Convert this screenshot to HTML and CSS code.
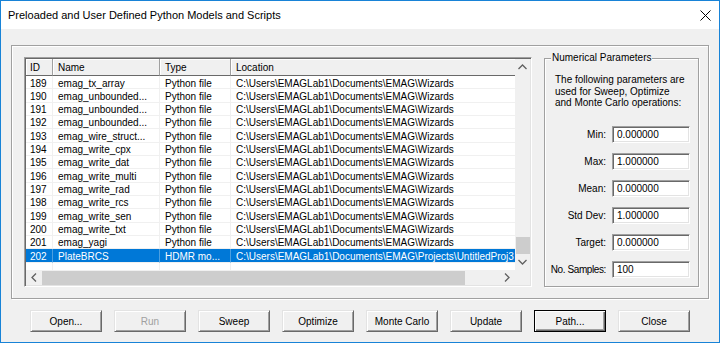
FILE: index.html
```html
<!DOCTYPE html>
<html lang="en">
<head>
    <meta charset="UTF-8">
    <title>Preloaded and User Defined Python Models and Scripts</title>
    <link rel="stylesheet" href="styles.css">
</head>
<body>
    <div class="window">
        <div class="titlebar">
            <span class="title">Preloaded and User Defined Python Models and Scripts</span>
            <svg class="close-icon" width="11" height="11" viewBox="0 0 11 11">
                <path d="M0.5 0.5 L10.5 10.5 M10.5 0.5 L0.5 10.5" stroke="#000" stroke-width="1" fill="none"/>
            </svg>
        </div>

        <div class="client">
            <div class="frame">
                <div class="listview">
                    <div class="lv-view">
                        <div class="lv-header">
                            <div class="hd col-id">ID</div>
                            <div class="hd col-name">Name</div>
                            <div class="hd col-type">Type</div>
                            <div class="hd col-loc">Location</div>
                        </div>
                        <div class="lv-row"><div class="cell col-id">189</div><div class="cell col-name">emag_tx_array</div><div class="cell col-type">Python file</div><div class="cell col-loc">C:\Users\EMAGLab1\Documents\EMAG\Wizards</div></div>
                        <div class="lv-row"><div class="cell col-id">190</div><div class="cell col-name">emag_unbounded...</div><div class="cell col-type">Python file</div><div class="cell col-loc">C:\Users\EMAGLab1\Documents\EMAG\Wizards</div></div>
                        <div class="lv-row"><div class="cell col-id">191</div><div class="cell col-name">emag_unbounded...</div><div class="cell col-type">Python file</div><div class="cell col-loc">C:\Users\EMAGLab1\Documents\EMAG\Wizards</div></div>
                        <div class="lv-row"><div class="cell col-id">192</div><div class="cell col-name">emag_unbounded...</div><div class="cell col-type">Python file</div><div class="cell col-loc">C:\Users\EMAGLab1\Documents\EMAG\Wizards</div></div>
                        <div class="lv-row"><div class="cell col-id">193</div><div class="cell col-name">emag_wire_struct...</div><div class="cell col-type">Python file</div><div class="cell col-loc">C:\Users\EMAGLab1\Documents\EMAG\Wizards</div></div>
                        <div class="lv-row"><div class="cell col-id">194</div><div class="cell col-name">emag_write_cpx</div><div class="cell col-type">Python file</div><div class="cell col-loc">C:\Users\EMAGLab1\Documents\EMAG\Wizards</div></div>
                        <div class="lv-row"><div class="cell col-id">195</div><div class="cell col-name">emag_write_dat</div><div class="cell col-type">Python file</div><div class="cell col-loc">C:\Users\EMAGLab1\Documents\EMAG\Wizards</div></div>
                        <div class="lv-row"><div class="cell col-id">196</div><div class="cell col-name">emag_write_multi</div><div class="cell col-type">Python file</div><div class="cell col-loc">C:\Users\EMAGLab1\Documents\EMAG\Wizards</div></div>
                        <div class="lv-row"><div class="cell col-id">197</div><div class="cell col-name">emag_write_rad</div><div class="cell col-type">Python file</div><div class="cell col-loc">C:\Users\EMAGLab1\Documents\EMAG\Wizards</div></div>
                        <div class="lv-row"><div class="cell col-id">198</div><div class="cell col-name">emag_write_rcs</div><div class="cell col-type">Python file</div><div class="cell col-loc">C:\Users\EMAGLab1\Documents\EMAG\Wizards</div></div>
                        <div class="lv-row"><div class="cell col-id">199</div><div class="cell col-name">emag_write_sen</div><div class="cell col-type">Python file</div><div class="cell col-loc">C:\Users\EMAGLab1\Documents\EMAG\Wizards</div></div>
                        <div class="lv-row"><div class="cell col-id">200</div><div class="cell col-name">emag_write_txt</div><div class="cell col-type">Python file</div><div class="cell col-loc">C:\Users\EMAGLab1\Documents\EMAG\Wizards</div></div>
                        <div class="lv-row"><div class="cell col-id">201</div><div class="cell col-name">emag_yagi</div><div class="cell col-type">Python file</div><div class="cell col-loc">C:\Users\EMAGLab1\Documents\EMAG\Wizards</div></div>
                        <div class="lv-row selected"><div class="cell col-id">202</div><div class="cell col-name">PlateBRCS</div><div class="cell col-type">HDMR mo...</div><div class="cell col-loc">C:\Users\EMAGLab1\Documents\EMAG\Projects\UntitledProj3</div></div>
                        <div class="lv-row filler"><div class="cell col-id"></div><div class="cell col-name"></div><div class="cell col-type"></div><div class="cell col-loc"></div></div>
                    </div>

                    <div class="vscroll">
                        <div class="sb-btn">
                            <svg width="9" height="6" viewBox="0 0 9 6"><polyline points="0.5,5 4.5,1 8.5,5" fill="none" stroke="#606060" stroke-width="1.3"/></svg>
                        </div>
                        <div class="v-track"><div class="v-thumb"></div></div>
                        <div class="sb-btn">
                            <svg width="9" height="6" viewBox="0 0 9 6"><polyline points="0.5,1 4.5,5 8.5,1" fill="none" stroke="#606060" stroke-width="1.3"/></svg>
                        </div>
                    </div>

                    <div class="hscroll">
                        <div class="sb-btn">
                            <svg width="6" height="9" viewBox="0 0 6 9"><polyline points="5,0.5 1,4.5 5,8.5" fill="none" stroke="#606060" stroke-width="1.3"/></svg>
                        </div>
                        <div class="h-track"><div class="h-thumb"></div></div>
                        <div class="sb-btn">
                            <svg width="6" height="9" viewBox="0 0 6 9"><polyline points="1,0.5 5,4.5 1,8.5" fill="none" stroke="#606060" stroke-width="1.3"/></svg>
                        </div>
                    </div>

                    <div class="corner"></div>
                </div>

                <div class="group">
                    <span class="group-title">Numerical Parameters</span>
                    <p class="group-desc">The following parameters are<br>used for Sweep, Optimize<br>and Monte Carlo operations:</p>
                    <div class="fields">
                        <label class="field"><span>Min:</span><input class="edit" type="text" value="0.000000"></label>
                        <label class="field"><span>Max:</span><input class="edit" type="text" value="1.000000"></label>
                        <label class="field"><span>Mean:</span><input class="edit" type="text" value="0.000000"></label>
                        <label class="field"><span>Std Dev:</span><input class="edit" type="text" value="1.000000"></label>
                        <label class="field"><span>Target:</span><input class="edit" type="text" value="0.000000"></label>
                        <label class="field"><span class="tight">No. Samples:</span><input class="edit" type="text" value="100"></label>
                    </div>
                </div>
            </div>

            <div class="buttons">
                <button class="btn">Open...</button>
                <button class="btn" disabled>Run</button>
                <button class="btn">Sweep</button>
                <button class="btn">Optimize</button>
                <button class="btn">Monte Carlo</button>
                <button class="btn">Update</button>
                <button class="btn btn-default">Path...</button>
                <button class="btn">Close</button>
            </div>
        </div>
    </div>
</body>
</html>
```

FILE: styles.css
```css
* {
    margin: 0;
    padding: 0;
    box-sizing: border-box;
}

body {
    font-family: "Liberation Sans", Arial, sans-serif;
    font-size: 10px;
    color: #000;
    background: #fff;
}

.window {
    width: 720px;
    height: 343px;
    border: 1px solid #1883d7;
    background: #f0f0f0;
    display: flex;
    flex-direction: column;
}

.titlebar {
    height: 28px;
    background: #fff;
    display: flex;
    align-items: center;
    justify-content: space-between;
    padding: 0 8px 0 7px;
}

.title {
    font-size: 11px;
}

.client {
    flex: 1;
    padding: 16px 10px 0 10px;
}

/* etched outer frame */
.frame {
    width: 698px;
    height: 254px;
    border: 1px solid #a0a0a0;
    box-shadow: 1px 1px 0 #fff, inset 1px 1px 0 #fff;
    display: flex;
    align-items: flex-start;
    gap: 12px;
    padding: 11px 9px 11px 12px;
}

/* list view */
.listview {
    width: 508px;
    height: 230px;
    flex-shrink: 0;
    border: 1px solid;
    border-color: #a0a0a0 #fff #fff #a0a0a0;
    box-shadow: inset 1px 1px 0 #696969, inset -1px -1px 0 #e3e3e3;
    padding: 1px;
    background: #fff;
    display: grid;
    grid-template-columns: 1fr 15px;
    grid-template-rows: 1fr 15px;
}

.lv-view {
    overflow: hidden;
    background: #fff;
}

.lv-header,
.lv-row {
    display: flex;
    width: max-content;
}

.lv-header {
    height: 17px;
}

.hd {
    height: 17px;
    line-height: 17px;
    padding-left: 5px;
    background: #f0f0f0;
    border-right: 1px solid #a0a0a0;
    border-bottom: 1px solid #696969;
    box-shadow: inset 1px 1px 0 #fff;
    white-space: nowrap;
    flex-shrink: 0;
}

.col-id { width: 27px; }
.col-name { width: 107px; }
.col-type { width: 71px; }
.col-loc { width: 330px; }

.hd.col-id,
.cell.col-id {
    padding-left: 4px;
}

.lv-row {
    height: 13.33px;
}

.cell {
    height: 100%;
    line-height: 12px;
    padding: 1.5px 0 0 5px;
    border-right: 1px solid #f0f0f0;
    border-bottom: 1px solid #f0f0f0;
    white-space: nowrap;
    flex-shrink: 0;
}

.lv-row.selected .cell {
    background: #0078d7;
    color: #fff;
    border-right-color: #4d9fe0;
}

.lv-row.filler {
    height: 20px;
}

.lv-row.filler .cell {
    border-bottom: none;
}

/* scrollbars */
.vscroll,
.hscroll {
    background: #f0f0f0;
    display: flex;
}

.vscroll {
    flex-direction: column;
}

.sb-btn {
    flex: 0 0 16px;
    display: flex;
    align-items: center;
    justify-content: center;
}

.v-track {
    flex: 1;
    display: flex;
    flex-direction: column;
    justify-content: flex-end;
    padding: 0 0 0 1px;
}

.v-thumb {
    height: 17px;
    background: #cdcdcd;
}

.h-track {
    flex: 1;
    display: flex;
    padding: 1px 0 0 0;
}

.h-thumb {
    width: 423px;
    background: #cdcdcd;
}

.corner {
    background: #f0f0f0;
}

/* numerical parameters group */
.group {
    width: 155px;
    height: 229px;
    margin-top: 1px;
    flex-shrink: 0;
    border: 1px solid #a0a0a0;
    box-shadow: 1px 1px 0 #fff, inset 1px 1px 0 #fff;
    padding: 0 8px 0 10px;
    display: flex;
    flex-direction: column;
}

.group-title {
    align-self: flex-start;
    margin: -7px 0 0 -4px;
    padding: 0 1px;
    line-height: 12px;
    background: #f0f0f0;
}

.group-desc {
    margin-top: 10px;
    line-height: 11.7px;
    white-space: nowrap;
}

.fields {
    margin-top: 17px;
    display: flex;
    flex-direction: column;
    gap: 10px;
}

.field {
    display: flex;
    justify-content: flex-end;
    align-items: center;
    gap: 6px;
    height: 17px;
}

.field span {
    white-space: nowrap;
    flex-shrink: 0;
}

.field .tight {
    letter-spacing: -0.4px;
}

.edit {
    width: 78px;
    height: 17px;
    flex-shrink: 0;
    font: inherit;
    color: #000;
    background: #fff;
    border: 1px solid;
    border-color: #a0a0a0 #fff #fff #a0a0a0;
    box-shadow: inset 1px 1px 0 #696969, inset -1px -1px 0 #e3e3e3;
    padding: 0 0 0 4px;
    outline: none;
}

/* push buttons */
.buttons {
    display: flex;
    justify-content: space-between;
    padding: 0 19px;
    margin-top: 11px;
}

.btn {
    width: 72px;
    height: 22px;
    font: inherit;
    color: #000;
    background: #f0f0f0;
    border: 1px solid;
    border-color: #e3e3e3 #696969 #696969 #e3e3e3;
    box-shadow: inset 1px 1px 0 #fff, inset -1px -1px 0 #a0a0a0;
}

.btn:disabled {
    color: #a0a0a0;
}

.btn-default {
    border-color: #000;
    box-shadow: inset 1px 1px 0 #fff, inset -1px -1px 0 #696969, inset -2px -2px 0 #a0a0a0;
}
```
